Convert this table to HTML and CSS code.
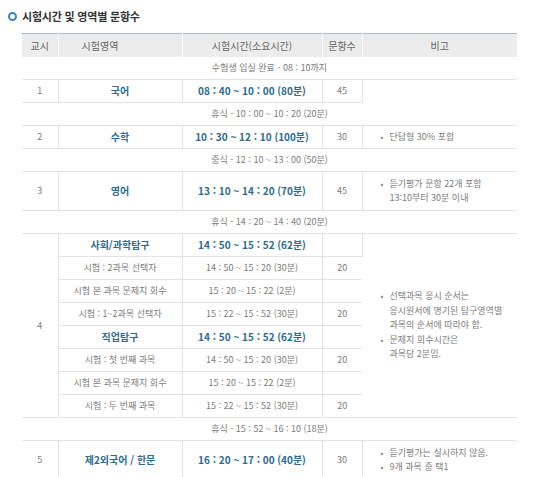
FILE: index.html
```
<!DOCTYPE html>
<html lang="ko">
<head>
<meta charset="utf-8">
<link rel="stylesheet" href="styles.css">
</head>
<body>
<h2 class="title"><span class="ring"></span>시험시간 및 영역별 문항수</h2>
<table class="schedule">
  <colgroup>
    <col class="c1"><col class="c2"><col class="c3"><col class="c4"><col class="c5">
  </colgroup>
  <thead>
    <tr><th>교시</th><th class="h-area">시험영역</th><th>시험시간(소요시간)</th><th>문항수</th><th>비고</th></tr>
  </thead>
  <tbody>
    <tr class="note"><td colspan="5">수험생 입실 완료 - 08 : 10까지</td></tr>
    <tr><td class="per">1</td><td class="subj">국어</td><td class="time">08 : 40 ~ 10 : 00 (80분)</td><td class="num">45</td><td class="remark blank"></td></tr>
    <tr class="note"><td colspan="5">휴식 - 10 : 00 ~ 10 : 20 (20분)</td></tr>
    <tr><td class="per">2</td><td class="subj">수학</td><td class="time">10 : 30 ~ 12 : 10 (100분)</td><td class="num">30</td><td class="remark"><ul><li>단답형 30% 포함</li></ul></td></tr>
    <tr class="note"><td colspan="5">중식 - 12 : 10 ~ 13 : 00 (50분)</td></tr>
    <tr class="tall"><td class="per">3</td><td class="subj">영어</td><td class="time">13 : 10 ~ 14 : 20 (70분)</td><td class="num">45</td><td class="remark"><ul><li>듣기평가 문항 22개 포함<br>13:10부터 30분 이내</li></ul></td></tr>
    <tr class="note"><td colspan="5">휴식 - 14 : 20 ~ 14 : 40 (20분)</td></tr>
    <tr><td class="per" rowspan="8">4</td><td class="subj">사회/과학탐구</td><td class="time">14 : 50 ~ 15 : 52 (62분)</td><td class="num"></td><td class="remark group" rowspan="8"><ul><li>선택과목 응시 순서는<br>응시원서에 명기된 탐구영역별<br>과목의 순서에 따라야 함.</li><li>문제지 회수시간은<br>과목당 2분임.</li></ul></td></tr>
    <tr><td>시험 : 2과목 선택자</td><td>14 : 50 ~ 15 : 20 (30분)</td><td class="num">20</td></tr>
    <tr><td>시험 본 과목 문제지 회수</td><td>15 : 20 ~ 15 : 22 (2분)</td><td class="num"></td></tr>
    <tr><td>시험 : 1~2과목 선택자</td><td>15 : 22 ~ 15 : 52 (30분)</td><td class="num">20</td></tr>
    <tr><td class="subj">직업탐구</td><td class="time">14 : 50 ~ 15 : 52 (62분)</td><td class="num"></td></tr>
    <tr><td>시험 : 첫 번째 과목</td><td>14 : 50 ~ 15 : 20 (30분)</td><td class="num">20</td></tr>
    <tr><td>시험 본 과목 문제지 회수</td><td>15 : 20 ~ 15 : 22 (2분)</td><td class="num"></td></tr>
    <tr><td>시험 : 두 번째 과목</td><td>15 : 22 ~ 15 : 52 (30분)</td><td class="num">20</td></tr>
    <tr class="note"><td colspan="5">휴식 - 15 : 52 ~ 16 : 10 (18분)</td></tr>
    <tr class="tall last"><td class="per">5</td><td class="subj">제2외국어 / 한문</td><td class="time">16 : 20 ~ 17 : 00 (40분)</td><td class="num">30</td><td class="remark"><ul><li>듣기평가는 실시하지 않음.</li><li>9개 과목 중 택1</li></ul></td></tr>
  </tbody>
</table>
</body>
</html>
```
FILE: styles.css
```
html, body {
  margin: 0;
  padding: 0;
  background: #ffffff;
}
body {
  font-family: "Noto Sans CJK KR", "Noto Sans", sans-serif;
  color: #7c7c7c;
}
.title {
  display: flex;
  align-items: center;
  margin: 0;
  padding: 5px 0 0 8px;
  height: 22px;
  font-size: 11px;
  font-weight: bold;
  color: #333333;
  letter-spacing: -0.2px;
}
.ring {
  width: 5px;
  height: 5px;
  border: 2px solid #3d7fc1;
  border-radius: 50%;
  margin-right: 5px;
}
.schedule {
  margin: 6px 0 0 22px;
  width: 495px;
  border-collapse: collapse;
  table-layout: fixed;
  font-size: 9px;
}
.c1 { width: 36px; }
.c2 { width: 124px; }
.c3 { width: 140px; }
.c4 { width: 40px; }
.c5 { width: 155px; }
.schedule th {
  height: 23px;
  padding: 0;
  background: #ececec;
  border-top: 1px solid #a8bccb;
  border-right: 1px solid #ffffff;
  font-weight: normal;
  font-size: 10px;
  color: #666666;
  text-align: center;
}
.schedule th.h-area { padding-right: 40px; }
.schedule th:last-child { border-right: none; }
.schedule td {
  height: 22px;
  padding: 0;
  border-bottom: 1px solid #e3e3e3;
  border-right: 1px solid #e3e3e3;
  text-align: center;
  vertical-align: middle;
  line-height: 12px;
}
.schedule td:last-child { border-right: none; }
.schedule tr.note td {
  border-right: none;
}
.schedule tr.tall td { height: 38px; }
.schedule tr.last td { border-bottom: none; }
.subj {
  font-weight: bold;
  color: #2d6a90;
  font-size: 10px;
}
.time {
  font-weight: bold;
  color: #2d6a90;
  font-size: 10px;
}
.remark {
  text-align: left !important;
}
.remark.blank { border-bottom: none !important; }
.remark ul {
  list-style: none;
  margin: 0;
  padding: 0 0 0 27px;
}
.remark li {
  position: relative;
  line-height: 14px;
}
.remark li::before {
  content: "•";
  position: absolute;
  left: -9px;
  top: 0;
  font-size: 8px;
}
.remark.group li { line-height: 14.5px; }
```
